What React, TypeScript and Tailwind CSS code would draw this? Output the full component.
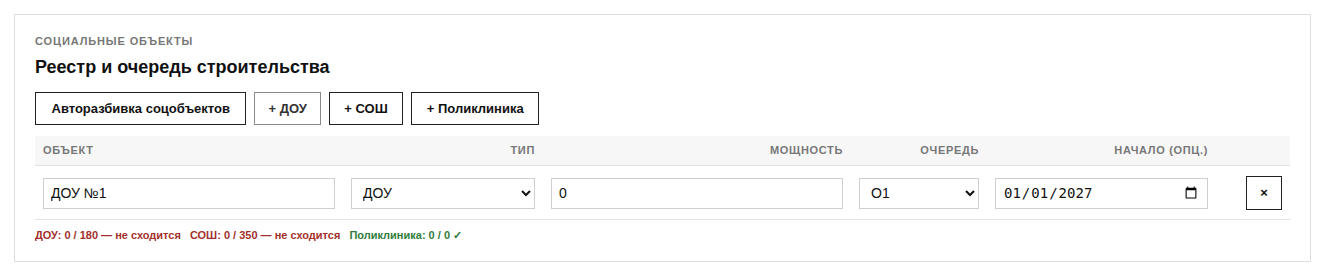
import React from 'react';

const COLS = [
  { key: 'obj', label: 'Объект', align: 'text-left', width: 'w-[308px]' },
  { key: 'type', label: 'Тип', align: 'text-right', width: 'w-[200px]' },
  { key: 'power', label: 'Мощность', align: 'text-right', width: 'w-[308px]' },
  { key: 'queue', label: 'Очередь', align: 'text-right', width: 'w-[136px]' },
  { key: 'start', label: 'Начало (опц.)', align: 'text-right', width: 'w-[229px]' },
  { key: 'del', label: '', align: 'text-right', width: '' },
];

const CHECKS = [
  { id: 1, text: 'ДОУ: 0 / 180 — не сходится', ok: false },
  { id: 2, text: 'СОШ: 0 / 350 — не сходится', ok: false },
  { id: 3, text: 'Поликлиника: 0 / 0 ✓', ok: true },
];

const fieldCls =
  'h-[31px] w-full border border-[#cfcfcf] bg-white px-[7px] text-[14px] text-[#111] outline-none';

const btnCls = 'h-[33px] border bg-white text-[13px] font-bold';

export default function App() {
  return (
    <div className="min-h-screen bg-white p-[14px] pr-[15px] font-['Liberation_Sans',Arial,sans-serif]">
      <section className="border border-[#dedede] bg-white px-[20px] pt-[19px] pb-[19px]">
        <div className="text-[11px] font-bold uppercase leading-[14px] tracking-[0.08em] text-[#777]">
          Социальные объекты
        </div>
        <h2 className="mt-[7px] text-[18px] font-bold leading-[24px] text-[#111]">
          Реестр и очередь строительства
        </h2>

        <div className="mt-[13px] flex gap-[8px]">
          <button className={`${btnCls} border-[#222] px-[15.5px] text-[#111]`}>
            Авторазбивка соцобъектов
          </button>
          <button className={`${btnCls} border-[#8a8a8a] px-[13px] text-[#333]`}>+ ДОУ</button>
          <button className={`${btnCls} border-[#222] px-[14.5px] text-[#111]`}>+ СОШ</button>
          <button className={`${btnCls} border-[#222] px-[14.5px] text-[#111]`}>
            + Поликлиника
          </button>
        </div>

        <table className="mt-[11px] w-full border-collapse">
          <thead>
            <tr className="border-b border-[#e2e2e2] bg-[#f7f7f7]">
              {COLS.map((c) => (
                <th
                  key={c.key}
                  className={`${c.align} ${c.width} px-[8px] py-[8px] text-[11px] font-bold uppercase leading-[13px] tracking-[0.06em] text-[#777]`}
                >
                  {c.label}
                </th>
              ))}
            </tr>
          </thead>
          <tbody>
            <tr className="border-b border-[#e2e2e2]">
              <td className="px-[8px] pt-[10px] pb-[9px] align-middle">
                <input className={fieldCls} defaultValue="ДОУ №1" />
              </td>
              <td className="px-[8px] pt-[10px] pb-[9px] align-middle">
                <select className={fieldCls} defaultValue="ДОУ">
                  <option>ДОУ</option>
                  <option>СОШ</option>
                  <option>Поликлиника</option>
                </select>
              </td>
              <td className="px-[8px] pt-[10px] pb-[9px] align-middle">
                <input className={fieldCls} defaultValue="0" />
              </td>
              <td className="px-[8px] pt-[10px] pb-[9px] align-middle">
                <select className={fieldCls} defaultValue="О1">
                  <option>О1</option>
                  <option>О2</option>
                  <option>О3</option>
                </select>
              </td>
              <td className="px-[8px] pt-[10px] pb-[9px] align-middle">
                <input
                  type="date"
                  className={`${fieldCls} font-['DejaVu_Sans_Mono',monospace] text-[13px]`}
                  defaultValue="2027-01-01"
                />
              </td>
              <td className="px-[8px] pt-[10px] pb-[9px] text-right align-middle">
                <button className="h-[34px] w-[36px] border border-[#222] bg-white text-[13px] font-bold text-[#111]">
                  ×
                </button>
              </td>
            </tr>
          </tbody>
        </table>

        <div className="mt-[9px] flex gap-[9px] text-[11px] font-bold leading-[13px]">
          {CHECKS.map((c) => (
            <span key={c.id} className={c.ok ? 'text-[#2f7d3b]' : 'text-[#a3302b]'}>
              {c.text}
            </span>
          ))}
        </div>
      </section>
    </div>
  );
}
